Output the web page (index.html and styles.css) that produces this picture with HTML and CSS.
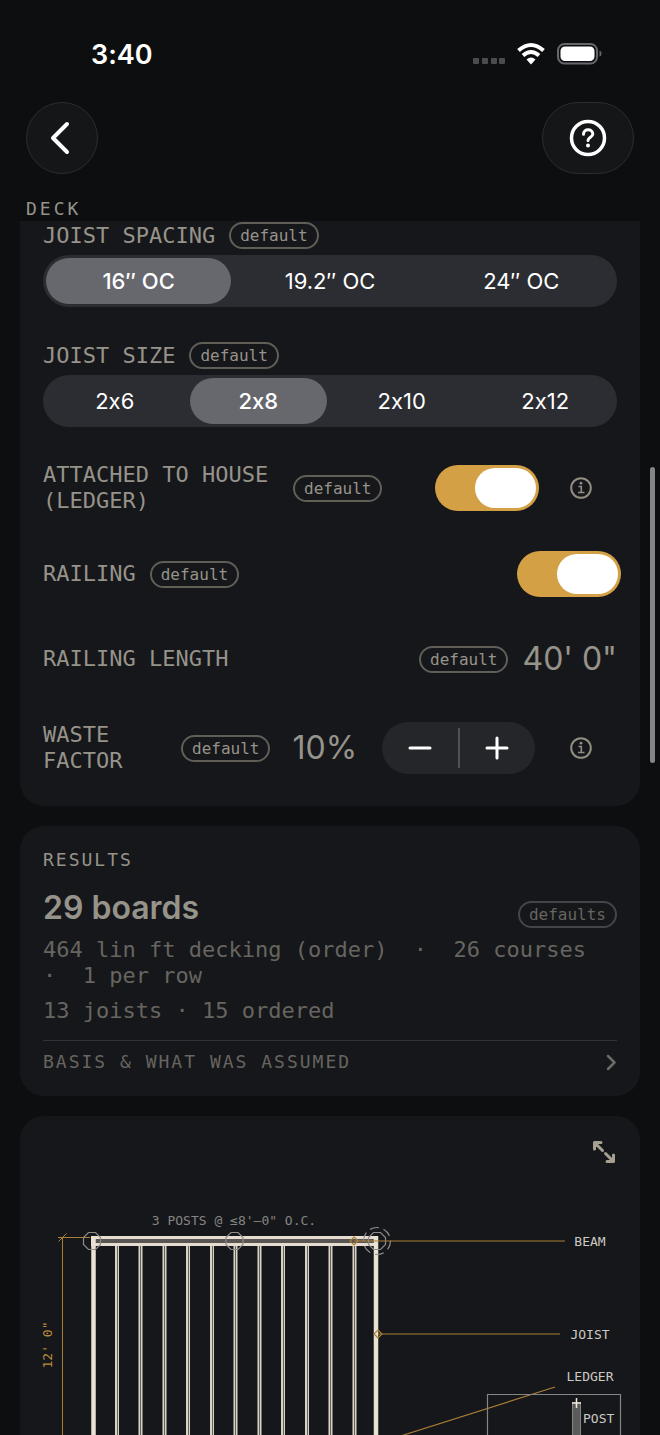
FILE: index.html
```html
<!DOCTYPE html>
<html lang="en">
<head>
    <meta charset="utf-8">
    <meta name="viewport" content="width=device-width, initial-scale=1">
    <title>Deck</title>
    <link rel="stylesheet" href="styles.css">
</head>
<body>
    <!-- Status bar -->
    <div class="status-bar">
        <span class="time">3:40</span>
        <svg class="status-icons" width="130" height="26" viewBox="0 0 130 26" aria-hidden="true">
            <g fill="#4b4c4e">
                <rect x="1" y="17" width="6" height="6" rx="1"/>
                <rect x="10" y="17" width="6" height="6" rx="1"/>
                <rect x="19" y="17" width="6" height="6" rx="1"/>
                <rect x="27" y="17" width="6" height="6" rx="1"/>
            </g>
            <g fill="none" stroke="#fff" stroke-width="4">
                <path d="M46.500 9.500Q59 -1.500 71.500 9.500"/>
                <path d="M51 14.500Q59 7.500 67 14.500"/>
            </g>
            <path d="M54.500 18.500Q59 14.500 63.500 18.500L59 23.500Z" fill="#fff"/>
            <rect x="86" y="3" width="39" height="19.500" rx="6.500" fill="none" stroke="#66676a" stroke-width="2"/>
            <rect x="88.500" y="5.500" width="34" height="14.500" rx="4.500" fill="#fff"/>
            <path d="M127.500 9.500Q129.500 10 129.500 12.500T127.500 15.500Z" fill="#66676a"/>
        </svg>
    </div>

    <header class="nav">
        <button class="nav-button" type="button" aria-label="Back">
            <svg width="24" height="36" viewBox="0 0 24 36"><path d="M19 4L5 18L19 32" fill="none" stroke="#fff" stroke-width="4" stroke-linecap="round" stroke-linejoin="round"/></svg>
        </button>
        <button class="nav-button wide" type="button" aria-label="Help">
            <svg width="38" height="38" viewBox="0 0 38 38" fill="none" stroke="#fff">
                <circle cx="19" cy="19" r="16.500" stroke-width="3.500"/>
                <path d="M14.500 15.200C14.500 9.200 23.800 9.400 23.800 15C23.800 18.200 19 18.200 19 21.500" stroke-width="3" stroke-linecap="round"/>
                <circle cx="19" cy="26.500" r="2" fill="#fff" stroke="none"/>
            </svg>
        </button>
    </header>

    <h2 class="section-title">DECK</h2>

    <main class="content">
        <!-- Inputs -->
        <section class="card inputs">
            <fieldset class="field">
                <div class="field-head">
                    <legend class="label">JOIST SPACING</legend>
                    <span class="badge">default</span>
                </div>
                <div class="segmented">
                    <label class="segment"><input type="radio" name="spacing" checked><span>16″ OC</span></label>
                    <label class="segment"><input type="radio" name="spacing"><span>19.2″ OC</span></label>
                    <label class="segment"><input type="radio" name="spacing"><span>24″ OC</span></label>
                </div>
            </fieldset>

            <fieldset class="field">
                <div class="field-head">
                    <legend class="label">JOIST SIZE</legend>
                    <span class="badge">default</span>
                </div>
                <div class="segmented">
                    <label class="segment"><input type="radio" name="size"><span>2x6</span></label>
                    <label class="segment"><input type="radio" name="size" checked><span>2x8</span></label>
                    <label class="segment"><input type="radio" name="size"><span>2x10</span></label>
                    <label class="segment"><input type="radio" name="size"><span>2x12</span></label>
                </div>
            </fieldset>

            <div class="row">
                <label class="label ledger" for="ledger">ATTACHED TO HOUSE (LEDGER)</label>
                <span class="badge">default</span>
                <input class="toggle push" type="checkbox" role="switch" id="ledger" checked>
                <button class="info" type="button" aria-label="About the ledger">
                    <svg width="22" height="22" viewBox="0 0 22 22" fill="none" stroke="#918e81" stroke-width="2">
                        <circle cx="11" cy="11" r="9.800"/>
                        <path d="M8.500 9.500H11.300V15.500M8 15.500H14.500" stroke-width="1.600"/>
                        <circle cx="11" cy="6.200" r="1.400" fill="#918e81" stroke="none"/>
                    </svg>
                </button>
            </div>

            <div class="row">
                <label class="label" for="railing">RAILING</label>
                <span class="badge">default</span>
                <input class="toggle push" type="checkbox" role="switch" id="railing" checked>
            </div>

            <div class="row">
                <span class="label">RAILING LENGTH</span>
                <span class="badge push">default</span>
                <span class="value">40' 0"</span>
            </div>

            <div class="row stepper-row">
                <span class="label waste">WASTE FACTOR</span>
                <span class="badge">default</span>
                <span class="value percent">10%</span>
                <div class="stepper push">
                    <button type="button" aria-label="Decrease">
                        <svg width="24" height="24" viewBox="0 0 24 24"><path d="M2 12H22" stroke="#fff" stroke-width="3" stroke-linecap="round"/></svg>
                    </button>
                    <button type="button" aria-label="Increase">
                        <svg width="24" height="24" viewBox="0 0 24 24"><path d="M2 12H22M12 2V22" stroke="#fff" stroke-width="3" stroke-linecap="round"/></svg>
                    </button>
                </div>
                <button class="info" type="button" aria-label="About the waste factor">
                    <svg width="22" height="22" viewBox="0 0 22 22" fill="none" stroke="#918e81" stroke-width="2">
                        <circle cx="11" cy="11" r="9.800"/>
                        <path d="M8.500 9.500H11.300V15.500M8 15.500H14.500" stroke-width="1.600"/>
                        <circle cx="11" cy="6.200" r="1.400" fill="#918e81" stroke="none"/>
                    </svg>
                </button>
            </div>
        </section>

        <!-- Results -->
        <section class="card results">
            <h3 class="results-title">RESULTS</h3>
            <div class="total">
                <strong>29 boards</strong>
                <span class="badge muted">defaults</span>
            </div>
            <p class="detail">464 lin ft decking (order)&nbsp; ·&nbsp; 26 courses&nbsp; ·&nbsp; 1 per row</p>
            <p class="detail">13 joists · 15 ordered</p>
            <button class="basis" type="button">
                <span>BASIS &amp; WHAT WAS ASSUMED</span>
                <svg width="12" height="18" viewBox="0 0 12 18"><path d="M3 3L9.500 9.500L3 16" fill="none" stroke="#6b6a65" stroke-width="2.500" stroke-linecap="round" stroke-linejoin="round"/></svg>
            </button>
        </section>

        <!-- Framing plan -->
        <section class="card plan">
            <button class="expand" type="button" aria-label="Expand">
                <svg width="24" height="24" viewBox="0 0 24 24" fill="none" stroke="#a5a08f" stroke-width="3" stroke-linecap="round" stroke-linejoin="round">
                    <path d="M2.500 9V2.500H9M3 3L10.500 10.500"/>
                    <path d="M21.500 15V21.500H15M21 21L13.500 13.500"/>
                </svg>
            </button>
            <svg class="drawing" viewBox="0 0 620 400" role="img" aria-label="Deck framing plan">
                <text class="note" x="214" y="109" text-anchor="middle">3 POSTS @ ≤8'–0" O.C.</text>

                <!-- depth dimension -->
                <g stroke="#a97f36" stroke-width="1">
                    <path d="M42.500 121V400M38 121.500H70M38.500 125.500L46.500 117.500"/>
                </g>
                <text class="dimension" transform="translate(32 229) rotate(-90)" text-anchor="middle">12' 0"</text>

                <!-- joists -->
                <g stroke="#d9d2c4" stroke-width="4">
                    <path d="M97 129V400M120.500 129V400M144.500 129V400M168 129V400M192 129V400M215.500 129V400M239.500 129V400M263 129V400M287 129V400M310.500 129V400M334.500 129V400"/>
                </g>
                <g stroke="#66625c" stroke-width="1">
                    <path d="M97.500 130V400M120.500 130V400M144.500 130V400M168.500 130V400M192.500 130V400M215.500 130V400M239.500 130V400M263.500 130V400M287.500 130V400M310.500 130V400M334.500 130V400"/>
                </g>

                <!-- beam and rims -->
                <rect x="71" y="120" width="287" height="10" fill="#e6dccf"/>
                <rect x="75" y="123" width="279" height="4" fill="#595552"/>
                <path d="M73.500 120V400M356 120V400" stroke="#e8e2d2" stroke-width="4.500"/>

                <!-- posts -->
                <g fill="none" stroke="#8d8c89" stroke-width="1.200">
                    <path id="post" d="M68.500 116.500H75.500L80.500 121.500V128.500L75.500 133.500H68.500L63.500 128.500V121.500Z"/>
                    <use href="#post" x="142.500"/>
                    <use href="#post" x="285"/>
                    <circle cx="357" cy="125" r="13.500" stroke-dasharray="9 5"/>
                </g>

                <!-- callouts -->
                <g fill="none" stroke="#a97f36" stroke-width="1.200">
                    <path d="M334 125H545M358 218H540M382 319.500L535 271"/>
                    <path d="M334 121L338 125L334 129L330 125Z"/>
                    <path d="M358 214L362 218L358 222L354 218Z"/>
                </g>
                <g class="callout" text-anchor="middle">
                    <text x="570" y="130">BEAM</text>
                    <text x="570" y="223">JOIST</text>
                    <text x="570" y="265">LEDGER</text>
                </g>

                <!-- post detail -->
                <path d="M467.500 400V278.500H600.500V400" fill="none" stroke="#858585" stroke-width="1.200"/>
                <rect x="552" y="286" width="9" height="120" fill="#5c5b5b"/>
                <path d="M552.500 286V400M560.500 286V400" stroke="#858481" stroke-width="1"/>
                <path d="M556.500 282V292M552 287H561" stroke="#eee8da" stroke-width="1.500"/>
                <text class="callout" x="563" y="307">POST</text>
            </svg>
        </section>
    </main>

    <div class="scroll-thumb"></div>
</body>
</html>
```
FILE: styles.css
```css
* {
    box-sizing: border-box;
}
body {
    margin: 0;
    height: 100vh;
    overflow: hidden;
    display: flex;
    flex-direction: column;
    background: #0d0e10;
    color: #96938a;
    font-family: Inter, sans-serif;
    font-feature-settings: "calt" 0;
    position: relative;
}
button {
    margin: 0;
    padding: 0;
    border: none;
    background: none;
    color: inherit;
    font: inherit;
    cursor: pointer;
}
h2, h3, p {
    margin: 0;
}
svg {
    display: block;
}

/* Status bar and navigation */
.status-bar {
    display: flex;
    justify-content: space-between;
    align-items: center;
    height: 40px;
    margin-top: 34px;
    padding: 0 58px 0 91px;
}
.time {
    color: #fff;
    font-size: 27px;
    font-weight: 600;
}
.nav {
    display: flex;
    justify-content: space-between;
    margin-top: 28px;
    padding: 0 26px;
}
.nav-button {
    display: flex;
    align-items: center;
    justify-content: center;
    width: 72px;
    height: 72px;
    padding-right: 4px;
    border: 1px solid #2c2d2f;
    border-radius: 36px;
    background: #151618;
}
.nav-button.wide {
    width: 92px;
    padding-right: 0;
}
.section-title {
    margin-top: 23px;
    padding: 0 26px;
    font-family: "DejaVu Sans Mono", monospace;
    font-size: 18px;
    font-weight: 400;
    line-height: 24px;
    letter-spacing: 3px;
}

/* Cards */
.content {
    flex: 1;
    min-height: 0;
    overflow: hidden;
    padding: 0 20px;
}
.card {
    margin-bottom: 20px;
    padding: 22px 23px;
    border-radius: 24px;
    background: #16171a;
}
.card.inputs {
    display: flex;
    flex-direction: column;
    gap: 35px;
    padding-top: 1px;
    padding-bottom: 29px;
    border-radius: 0 0 24px 24px;
}
.field {
    min-width: 0;
    margin: 0;
    padding: 0;
    border: none;
}
.field-head {
    display: flex;
    align-items: center;
    gap: 14px;
    margin-bottom: 6px;
}
.label {
    padding: 0;
    font-family: "DejaVu Sans Mono", monospace;
    font-size: 22px;
    line-height: 26px;
}
.label.ledger {
    width: 236px;
}
.label.waste {
    width: 124px;
}
.badge {
    flex: none;
    padding: 0 9px;
    border: 2px solid #5f5e57;
    border-radius: 14px;
    font-family: "DejaVu Sans Mono", monospace;
    font-size: 16px;
    line-height: 23px;
}
.badge.muted {
    border-color: #444546;
    color: #666560;
}

/* Segmented control */
.segmented {
    display: flex;
    height: 52px;
    border-radius: 26px;
    background: #2c2d32;
}
.segment {
    position: relative;
    flex: 1;
    display: flex;
    padding: 3px;
    color: #fff;
    font-size: 22px;
    cursor: pointer;
}
.segment input {
    position: absolute;
    opacity: 0;
}
.segment span {
    flex: 1;
    display: flex;
    align-items: center;
    justify-content: center;
    border-radius: 23px;
}
.segment input:checked + span {
    background: #67676e;
    font-weight: 500;
}

/* Rows */
.row {
    display: flex;
    align-items: center;
    gap: 14px;
    min-height: 50px;
}
.row.stepper-row {
    min-height: 58px;
}
.push {
    margin-left: auto;
}
.value {
    font-size: 32px;
    line-height: 40px;
}
.value.percent {
    margin-left: 8px;
}
.toggle {
    flex: none;
    appearance: none;
    display: flex;
    justify-content: flex-end;
    width: 104px;
    height: 46px;
    margin-top: 0;
    margin-right: -4px;
    margin-bottom: 0;
    padding: 3px;
    border-radius: 23px;
    background: #d4a046;
    cursor: pointer;
}
.toggle::before {
    content: "";
    width: 61px;
    border-radius: 20px;
    background: #fff;
}
.toggle:not(:checked) {
    justify-content: flex-start;
    background: #3a3b40;
}
.info {
    flex: none;
    display: flex;
    align-items: center;
    justify-content: center;
    width: 72px;
    height: 44px;
    margin-left: -4px;
}
.stepper {
    flex: none;
    display: flex;
    align-items: center;
    width: 153px;
    height: 52px;
    border-radius: 26px;
    background: #25262a;
}
.stepper button {
    flex: 1;
    display: flex;
    align-items: center;
    justify-content: center;
    height: 40px;
}
.stepper button + button {
    border-left: 2px solid #505155;
}

/* Results */
.results-title {
    font-family: "DejaVu Sans Mono", monospace;
    font-size: 18px;
    font-weight: 400;
    line-height: 24px;
    letter-spacing: 2px;
}
.total {
    display: flex;
    align-items: flex-end;
    justify-content: space-between;
    height: 40px;
    margin-top: 16px;
}
.total strong {
    font-size: 32px;
    font-weight: 600;
    line-height: 40px;
}
.detail {
    margin-top: 9px;
    color: #666560;
    font-family: "DejaVu Sans Mono", monospace;
    font-size: 22px;
    line-height: 26px;
}
.basis {
    display: flex;
    align-items: center;
    justify-content: space-between;
    width: 100%;
    margin-top: 16px;
    padding-top: 9px;
    border-top: 1px solid #323336;
    color: #666560;
    font-family: "DejaVu Sans Mono", monospace;
    font-size: 18px;
    line-height: 24px;
    letter-spacing: 2px;
}

/* Framing plan */
.card.plan {
    position: relative;
    margin-bottom: 0;
    padding: 0;
}
.expand {
    position: absolute;
    top: 24px;
    right: 24px;
}
.drawing {
    width: 100%;
}
.drawing text {
    font-family: "DejaVu Sans Mono", monospace;
    font-size: 13px;
}
.note {
    fill: #858482;
}
.dimension {
    fill: #b98b3c;
}
.callout {
    fill: #cbc9c3;
}

.scroll-thumb {
    position: absolute;
    top: 467px;
    right: 5px;
    width: 5px;
    height: 296px;
    border-radius: 3px;
    background: #858587;
}
```
